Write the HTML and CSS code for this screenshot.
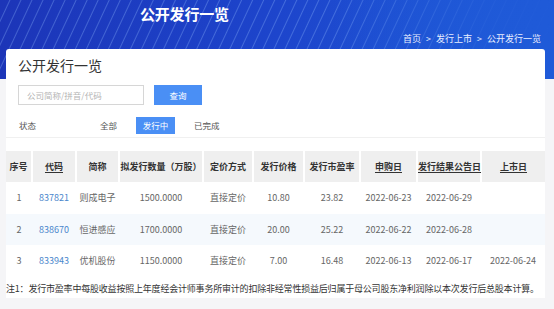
FILE: index.html
```html
<!DOCTYPE html>
<html lang="zh">
<head>
<meta charset="utf-8">
<link rel="stylesheet" href="styles.css">
</head>
<body>
<div class="banner">
  <div class="banner-title">公开发行一览</div>
  <div class="crumbs">首页 <span class="sep">&gt;</span> 发行上市 <span class="sep">&gt;</span> 公开发行一览</div>
</div>
<div class="card">
  <div class="card-title">公开发行一览</div>
  <div class="search">
    <div class="input">公司简称/拼音/代码</div>
    <div class="btn">查询</div>
  </div>
  <div class="status">
    <span class="label">状态</span>
    <span class="opt">全部</span>
    <span class="opt active">发行中</span>
    <span class="opt">已完成</span>
  </div>
  <table class="grid">
    <colgroup>
      <col style="width:26px"><col style="width:44px"><col style="width:43px"><col style="width:84px"><col style="width:50px"><col style="width:51px"><col style="width:56px"><col style="width:57px"><col style="width:64px"><col style="width:64px">
    </colgroup>
    <thead>
      <tr><th>序号</th><th><u>代码</u></th><th>简称</th><th>拟发行数量（万股）</th><th>定价方式</th><th>发行价格</th><th>发行市盈率</th><th><u>申购日</u></th><th><u>发行结果公告日</u></th><th><u>上市日</u></th></tr>
    </thead>
    <tbody>
      <tr><td>1</td><td class="code">837821</td><td>则成电子</td><td>1500.0000</td><td>直接定价</td><td>10.80</td><td>23.82</td><td>2022-06-23</td><td>2022-06-29</td><td></td></tr>
      <tr class="alt"><td>2</td><td class="code">838670</td><td>恒进感应</td><td>1700.0000</td><td>直接定价</td><td>20.00</td><td>25.22</td><td>2022-06-22</td><td>2022-06-28</td><td></td></tr>
      <tr><td>3</td><td class="code">833943</td><td>优机股份</td><td>1150.0000</td><td>直接定价</td><td>7.00</td><td>16.48</td><td>2022-06-13</td><td>2022-06-17</td><td>2022-06-24</td></tr>
    </tbody>
  </table>
  <div class="note">注1：发行市盈率中每股收益按照上年度经会计师事务所审计的扣除非经常性损益后归属于母公司股东净利润除以本次发行后总股本计算。</div>
</div>
</body>
</html>
```
FILE: styles.css
```css
* { box-sizing: border-box; }
html, body { margin: 0; padding: 0; }
body {
  width: 554px;
  height: 309px;
  overflow: hidden;
  background: #f5f5f7;
  font-family: "Noto Sans CJK SC", "Microsoft YaHei", sans-serif;
  color: #333;
}
.banner {
  height: 79px;
  background:
    repeating-linear-gradient(115deg, rgba(255,255,255,0) 0px, rgba(255,255,255,0) 8px, rgba(150,190,255,0.32) 9px, rgba(255,255,255,0) 10px),
    linear-gradient(90deg, #1c35b8 0%, #1d45cc 50%, #1f5ad8 100%);
  position: relative;
  color: #fff;
  display: flex;
  flex-direction: column;
}
.banner::after {
  content: "";
  position: absolute;
  inset: 0;
  background: linear-gradient(90deg, rgba(31,90,216,0) 0%, rgba(31,90,216,0) 60%, rgba(31,90,216,0.85) 88%, rgba(31,90,216,1) 100%);
}
.banner-title {
  position: relative;
  z-index: 1;
  padding-left: 140px;
  padding-top: 4px;
  font-size: 15px;
  font-weight: bold;
  line-height: 20px;
  letter-spacing: -0.2px;
}
.crumbs {
  position: relative;
  z-index: 1;
  align-self: flex-end;
  margin-top: 9px;
  padding-right: 13px;
  font-size: 9px;
  line-height: 12px;
  color: #e8eeff;
}
.crumbs .sep { margin: 0 3px; }
.card {
  position: relative;
  margin: -30px 9px 0 6px;
  background: #fff;
  border-radius: 3px 3px 0 0;
  padding-top: 8px;
  height: 249px;
}
.card-title {
  padding-left: 12px;
  font-size: 14px;
  line-height: 16px;
  color: #333;
}
.search {
  display: flex;
  gap: 10px;
  margin-top: 12px;
  padding-left: 12px;
}
.input {
  width: 126px;
  height: 20px;
  border: 1px solid #d6d6d6;
  font-size: 8.5px;
  line-height: 18px;
  color: #b5b5b5;
  padding-left: 8px;
}
.btn {
  width: 48px;
  height: 20px;
  background: #4a8ff5;
  color: #fff;
  font-size: 8.5px;
  line-height: 20px;
  text-align: center;
}
.status {
  display: flex;
  align-items: center;
  margin-top: 12px;
  padding-left: 13px;
  font-size: 8.5px;
  color: #555;
  border-bottom: 1px solid #f0f0f0;
  height: 21px;
  padding-bottom: 4px;
}
.status .label { width: 81px; }
.status .opt { margin-right: 19px; line-height: 17px; }
.status .opt.active {
  background: #4a8ff5;
  color: #fff;
  width: 39px;
  text-align: center;
}
.grid {
  margin-top: 13px;
  width: 539px;
  border-collapse: collapse;
  table-layout: fixed;
  font-size: 9px;
}
.grid th {
  background: #efefef;
  height: 31px;
  font-weight: bold;
  color: #333;
  border-left: 2px solid #fff;
  padding: 0;
  white-space: nowrap;
}
.grid th:first-child { border-left: none; }
.grid th u { text-underline-offset: 2px; }
.grid td {
  height: 31.5px;
  text-align: center;
  color: #666;
  padding: 0;
  white-space: nowrap;
}
.grid td.code { color: #4a87cc; }
.grid tr.alt td { background: #f5f9fd; }
.note {
  margin-top: 6px;
  font-size: 9px;
  line-height: 12px;
  color: #333;
  white-space: nowrap;
  letter-spacing: -0.2px;
}
```
